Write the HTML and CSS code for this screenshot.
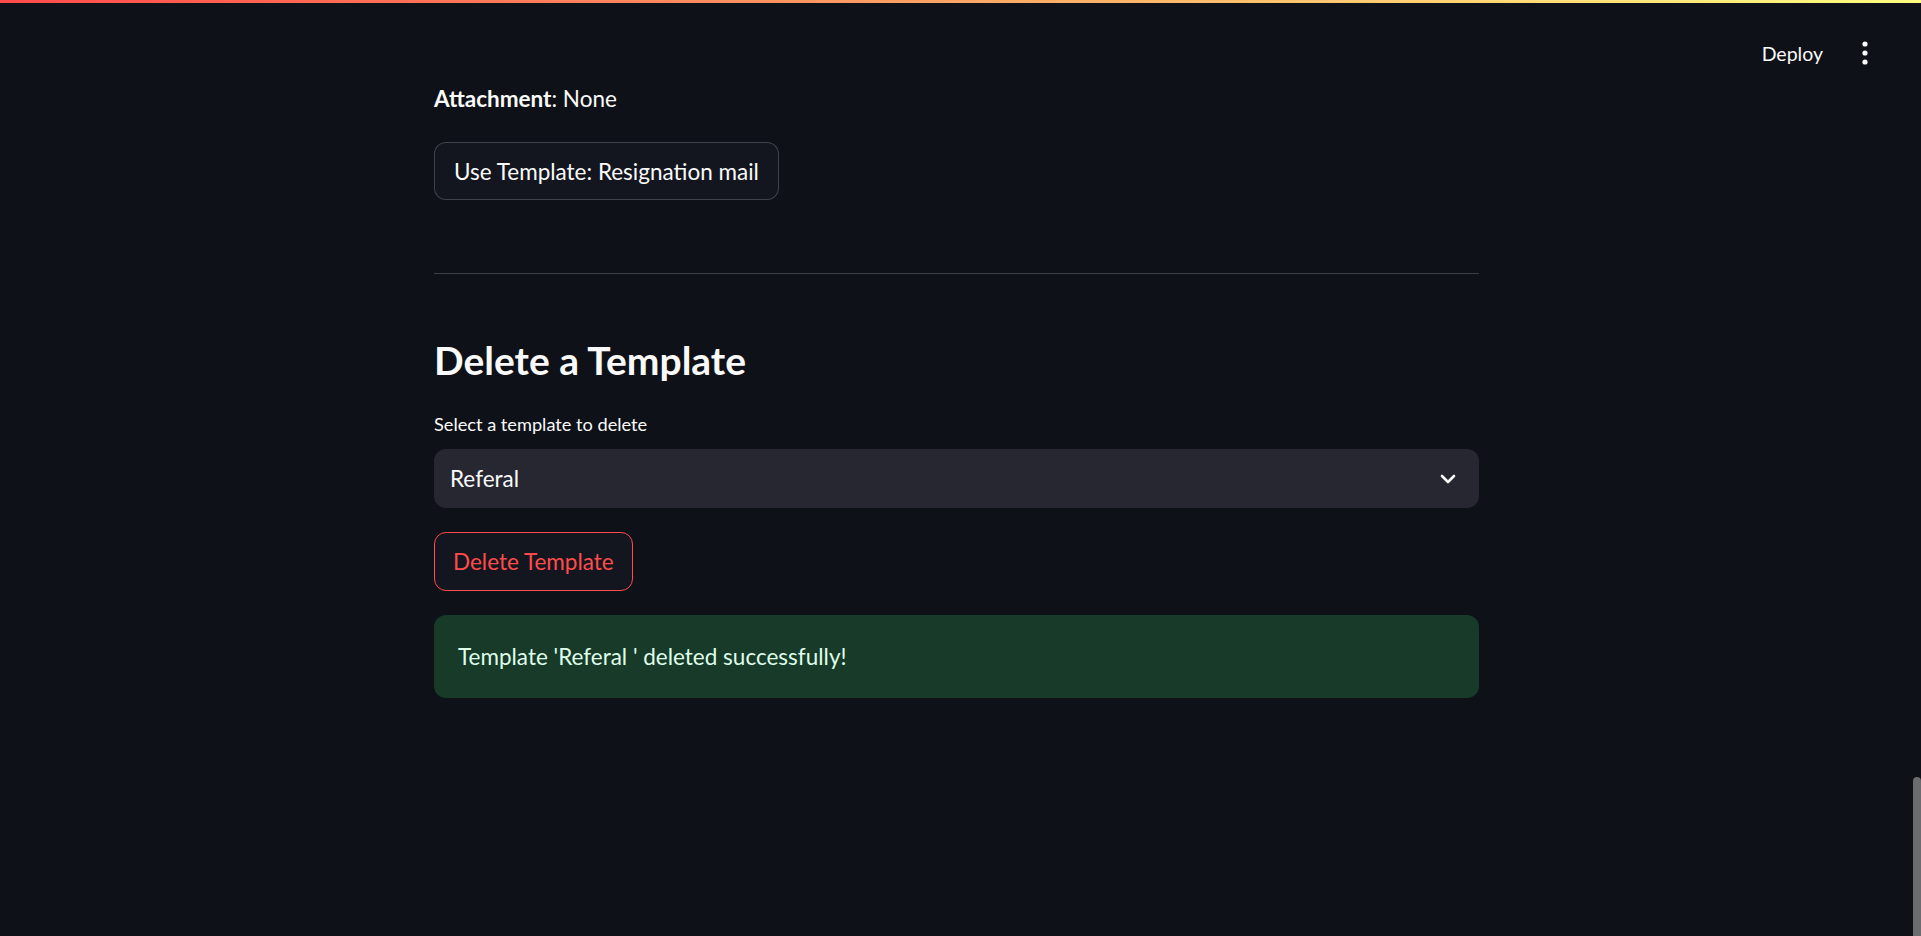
FILE: index.html
```html
<!DOCTYPE html>
<html lang="en">
<head>
<meta charset="utf-8">
<title>Templates</title>
<link rel="stylesheet" href="styles.css">
</head>
<body>
<div class="decoration"></div>
<header class="app-header">
  <button class="deploy">Deploy</button>
  <button class="menu" aria-label="Main menu">
    <svg width="8" height="24" viewBox="0 0 8 24"><circle cx="4" cy="3" r="2.6" fill="#fafafa"/><circle cx="4" cy="12" r="2.6" fill="#fafafa"/><circle cx="4" cy="21" r="2.6" fill="#fafafa"/></svg>
  </button>
</header>
<div class="scroll-thumb"></div>
<main class="app-view">
  <section class="block">
    <p class="markdown"><strong>Attachment</strong>: None</p>
    <div class="row"><button class="btn">Use Template: Resignation mail</button></div>
    <hr class="divider">
    <h3 class="subheader">Delete a Template</h3>
    <div class="field">
      <label class="field-label">Select a template to delete</label>
      <div class="select">
        <span class="select-value">Referal</span>
        <svg class="chevron" width="16" height="10" viewBox="0 0 16 10"><path d="M2 2 L8 8 L14 2" fill="none" stroke="#fafafa" stroke-width="2.6" stroke-linecap="round" stroke-linejoin="round"/></svg>
      </div>
    </div>
    <div class="row"><button class="btn btn-danger">Delete Template</button></div>
    <div class="alert-success">Template 'Referal ' deleted successfully!</div>
  </section>
</main>
</body>
</html>
```
FILE: styles.css
```css
* { box-sizing: border-box; }
html, body { margin: 0; padding: 0; }
body {
  background: #0e1117;
  color: #fafafa;
  font-family: "Lato", "Noto Sans", sans-serif;
  width: 1921px;
  height: 936px;
  overflow: hidden;
  position: relative;
}
.decoration {
  position: absolute;
  top: 0; left: 0; right: 0;
  height: 3px;
  background: linear-gradient(90deg, #ff4b4b, #ffff80);
  z-index: 3;
}
.app-header {
  position: absolute;
  top: 0; right: 0;
  height: 90px;
  display: flex;
  align-items: center;
  gap: 24px;
  padding: 16px 52px 0 0;
  z-index: 2;
}
.deploy {
  background: transparent;
  border: none;
  color: #fafafa;
  font-family: inherit;
  font-size: 19.5px;
  padding: 0;
}
.menu {
  background: transparent;
  border: none;
  padding: 0;
  display: flex;
  margin-left: 14px;
}
.scroll-thumb {
  position: absolute;
  right: 0;
  top: 777px;
  width: 8px;
  height: 170px;
  border-radius: 4px;
  background: #6b6c70;
}
.app-view {
  padding-right: 8px;
}
.block {
  width: 1045px;
  margin: 0 auto;
  padding-top: 80px;
  display: flex;
  flex-direction: column;
}
.markdown {
  margin: 0;
  font-size: 22.5px;
  line-height: 38px;
}
.markdown strong { font-weight: 700; }
.row { margin-top: 24px; display: flex; }
.btn {
  height: 58px;
  padding: 0 19px;
  border-radius: 12px;
  border: 1px solid rgba(250, 250, 250, 0.2);
  background: #13161e;
  color: #fafafa;
  font-family: inherit;
  font-size: 22.5px;
  display: flex;
  align-items: center;
}
.btn-danger {
  border-color: #ff4b4b;
  color: #ff4b4b;
  height: 59px;
  padding: 0 18px;
}
.divider {
  margin: 73px 0 0;
  border: none;
  border-top: 1px solid rgba(250, 250, 250, 0.2);
  height: 0;
}
.subheader {
  margin: 61px 0 0;
  font-size: 39px;
  font-weight: 700;
  line-height: 50px;
}
.field { margin-top: 22px; display: flex; flex-direction: column; }
.field-label {
  font-size: 18.2px;
  line-height: 34px;
  margin-bottom: 8px;
}
.select {
  height: 59px;
  border-radius: 12px;
  background: #262730;
  display: flex;
  align-items: center;
  justify-content: space-between;
  padding: 0 23px 0 16px;
  font-size: 22.5px;
}
.chevron { display: block; }
.alert-success {
  margin-top: 24px;
  height: 83px;
  border-radius: 12px;
  background: #173a29;
  color: #dffde9;
  font-size: 22.5px;
  display: flex;
  align-items: center;
  padding: 0 24px;
}
```
